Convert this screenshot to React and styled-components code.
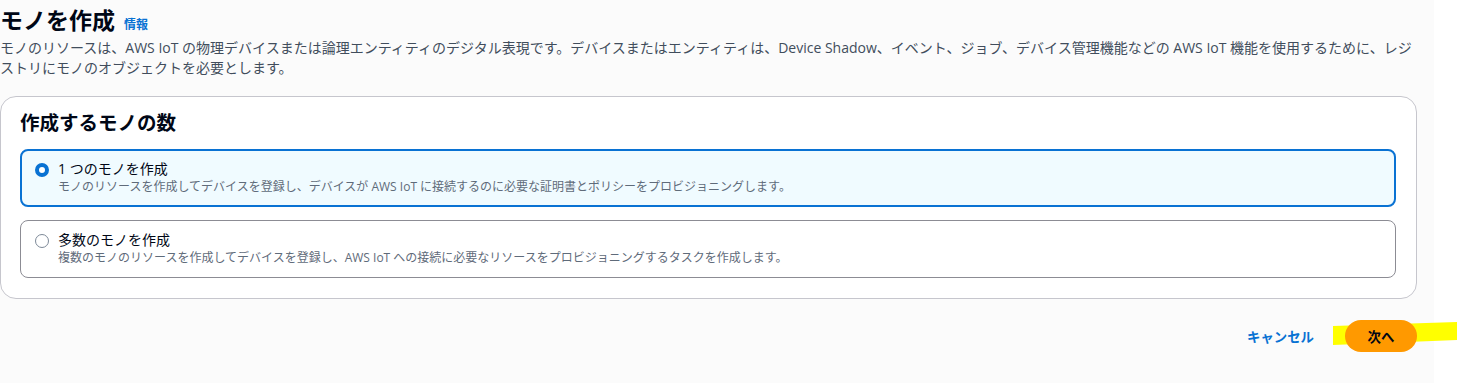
import styled, { createGlobalStyle } from 'styled-components'

const GlobalStyle = createGlobalStyle`
  html, body {
    margin: 0;
    padding: 0;
    background: #ffffff;
  }
  body {
    font-family: "Open Sans", "Noto Sans CJK JP", sans-serif;
    color: #000716;
  }
`

const Page = styled.div`
  position: relative;
  width: 1434px;
  height: 383px;
  background: #fbfbfb;
  overflow: hidden;
`

const Header = styled.header`
  display: flex;
  align-items: baseline;
  gap: 9px;
  margin-top: 4px;
`

const Title = styled.h1`
  margin: 0;
  font-size: 23px;
  line-height: 32px;
  font-weight: 700;
  color: #000716;
`

const InfoLink = styled.a`
  font-size: 12px;
  font-weight: 700;
  color: #0972d3;
  text-decoration: none;
`

const Description = styled.p`
  margin: 2px 0 0;
  width: 1425px;
  font-size: 14px;
  line-height: 20px;
  color: #414d5c;
`

const Container = styled.section`
  margin-top: 18px;
  width: 1417px;
  box-sizing: border-box;
  border: 1px solid #c6c6cd;
  border-radius: 16px;
  background: #ffffff;
  padding: 11px 20px 20px 19px;
`

const SectionTitle = styled.h2`
  margin: 0 0 11px;
  font-size: 19.5px;
  line-height: 30px;
  font-weight: 700;
  color: #000716;
`

const Options = styled.div`
  display: flex;
  flex-direction: column;
  gap: 13px;
`

const Option = styled.label`
  display: flex;
  align-items: flex-start;
  gap: 9px;
  box-sizing: border-box;
  height: 58px;
  padding: ${(p) => (p.$checked ? '8px 13px' : '9px 14px')};
  border: ${(p) => (p.$checked ? '2px solid #0972d3' : '1px solid #8c8c94')};
  border-radius: 8px;
  background: ${(p) => (p.$checked ? '#f0fbff' : '#ffffff')};
`

const Radio = styled.span`
  flex: none;
  margin-top: 4px;
  width: 14px;
  height: 14px;
  box-sizing: border-box;
  border-radius: 50%;
  border: ${(p) => (p.$checked ? '4px solid #0972d3' : '1.5px solid #7d8998')};
  background: #ffffff;
`

const OptionText = styled.div`
  display: flex;
  flex-direction: column;
`

const OptionLabel = styled.span`
  font-size: 14px;
  line-height: 20px;
  color: #000716;
`

const OptionDesc = styled.span`
  font-size: 12px;
  line-height: 16px;
  color: #5f6b7a;
`

const Footer = styled.footer`
  display: flex;
  justify-content: flex-end;
  align-items: center;
  gap: 31px;
  width: 1417px;
  margin-top: 21px;
`

const LinkButton = styled.button`
  border: none;
  background: none;
  padding: 0;
  font-family: inherit;
  font-size: 13.4px;
  font-weight: 700;
  color: #0972d3;
`

const PrimaryButton = styled.button`
  position: relative;
  z-index: 1;
  width: 72px;
  height: 32px;
  border: none;
  border-radius: 16px;
  background: #ff9900;
  font-family: inherit;
  font-size: 13.4px;
  font-weight: 700;
  color: #000716;
`

const Highlight = styled.svg`
  position: absolute;
  left: 1333px;
  top: 321px;
`

const options = [
  {
    label: '1 つのモノを作成',
    desc: 'モノのリソースを作成してデバイスを登録し、デバイスが AWS IoT に接続するのに必要な証明書とポリシーをプロビジョニングします。',
    checked: true,
  },
  {
    label: '多数のモノを作成',
    desc: '複数のモノのリソースを作成してデバイスを登録し、AWS IoT への接続に必要なリソースをプロビジョニングするタスクを作成します。',
    checked: false,
  },
]

export default function App() {
  return (
    <>
      <GlobalStyle />
      <Page>
        <Header>
          <Title>モノを作成</Title>
          <InfoLink href="#">情報</InfoLink>
        </Header>
        <Description>
          モノのリソースは、AWS IoT の物理デバイスまたは論理エンティティのデジタル表現です。デバイスまたはエンティティは、Device Shadow、イベント、ジョブ、デバイス管理機能などの AWS IoT 機能を使用するために、レジストリにモノのオブジェクトを必要とします。
        </Description>
        <Container>
          <SectionTitle>作成するモノの数</SectionTitle>
          <Options>
            {options.map((o) => (
              <Option key={o.label} $checked={o.checked}>
                <Radio $checked={o.checked} />
                <OptionText>
                  <OptionLabel>{o.label}</OptionLabel>
                  <OptionDesc>{o.desc}</OptionDesc>
                </OptionText>
              </Option>
            ))}
          </Options>
        </Container>
        <Footer>
          <LinkButton>キャンセル</LinkButton>
          <PrimaryButton>次へ</PrimaryButton>
        </Footer>
      </Page>
      <Highlight width="124" height="26" viewBox="0 0 124 26">
        <polygon points="0,5 124,1 124,19 0,24" fill="#ffff00" />
      </Highlight>
    </>
  )
}
